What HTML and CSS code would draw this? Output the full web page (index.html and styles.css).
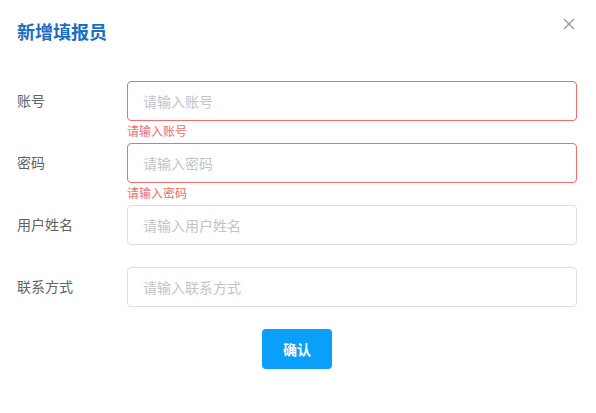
FILE: index.html
```html
<!DOCTYPE html>
<html lang="zh">
<head>
<meta charset="utf-8">
<title>新增填报员</title>
<link rel="stylesheet" href="styles.css">
</head>
<body>
<div class="dialog">
  <div class="header">
    <h1 class="title">新增填报员</h1>
    <button class="close" aria-label="关闭">
      <svg viewBox="0 0 16 16" width="16" height="16"><path d="M3 3 L13 13 M13 3 L3 13" stroke="#909399" stroke-width="1.2" fill="none"/></svg>
    </button>
  </div>
  <form class="form">
    <div class="row">
      <label class="label">账号</label>
      <div class="control">
        <input class="input is-error" placeholder="请输入账号">
        <div class="error">请输入账号</div>
      </div>
    </div>
    <div class="row">
      <label class="label">密码</label>
      <div class="control">
        <input class="input is-error" placeholder="请输入密码">
        <div class="error">请输入密码</div>
      </div>
    </div>
    <div class="row">
      <label class="label">用户姓名</label>
      <div class="control">
        <input class="input" placeholder="请输入用户姓名">
      </div>
    </div>
    <div class="row">
      <label class="label">联系方式</label>
      <div class="control">
        <input class="input" placeholder="请输入联系方式">
      </div>
    </div>
    <div class="actions">
      <button type="button" class="btn">确认</button>
    </div>
  </form>
</div>
</body>
</html>
```
FILE: styles.css
```css
* { box-sizing: border-box; }
html, body { margin: 0; padding: 0; background: #fff; }
body { font-family: "Noto Sans CJK SC", "Noto Sans", sans-serif; }
.dialog { width: 596px; padding: 0 19px 0 17px; }
.header { display: flex; justify-content: space-between; align-items: flex-start; }
.title { margin: 19px 0 0; font-size: 18px; line-height: 24px; font-weight: 700; color: #1a6ec6; }
.close { margin-top: 16px; width: 16px; height: 16px; padding: 0; border: 0; background: none; display: flex; }
.form { margin-top: 38px; }
.row { display: flex; margin-bottom: 22px; }
.label { width: 110px; flex: none; font-size: 14px; line-height: 39px; color: #606266; }
.control { flex: 1; position: relative; }
.input { display: block; width: 100%; height: 40px; border: 1px solid #dcdfe6; border-radius: 4px; padding: 0 15px 1px; font-family: inherit; font-size: 14px; color: #606266; outline: none; }
.input::placeholder { color: #c0c4cc; }
.input.is-error { border-color: #f56c6c; }
.error { position: absolute; top: 100%; left: 0; padding-top: 4px; font-size: 12px; line-height: 1; color: #f56c6c; }
.actions { display: flex; justify-content: center; margin-left: -17px; margin-right: -17px; }
.btn { width: 70px; height: 40px; border: 0; border-radius: 4px; background: #0aa0fa; color: #fff; font-family: inherit; font-size: 14px; font-weight: 700; }
```
